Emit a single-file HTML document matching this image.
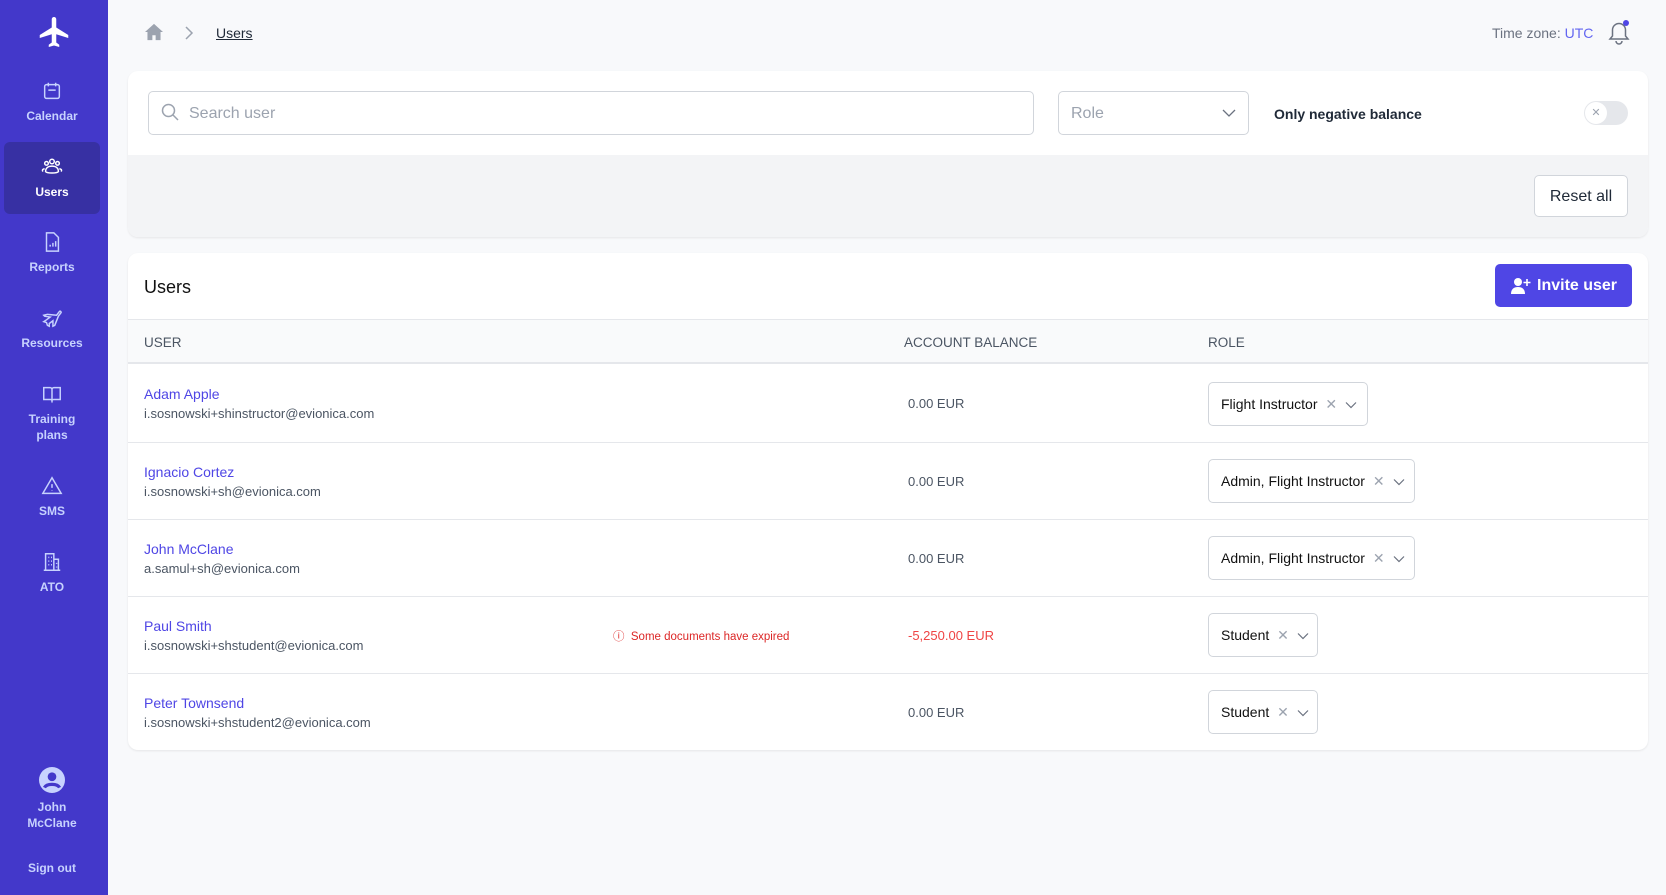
<!DOCTYPE html>
<html><head><meta charset="utf-8"><style>
*{box-sizing:border-box;margin:0;padding:0}
body{width:1666px;height:895px;background:#f8f9fb;font-family:"Liberation Sans",sans-serif;position:relative;overflow:hidden;color:#111827}
.abs{position:absolute}
.side{left:0;top:0;width:108px;height:895px;background:#4338ca}
.nav{position:absolute;left:4px;width:96px;text-align:center;color:#c7d2fe;font-size:12px;font-weight:bold;line-height:16px}
.nav svg{display:block;margin:0 auto 6px}
.card{background:#fff;border-radius:10px;box-shadow:0 1px 2px rgba(0,0,0,.08)}
.name{color:#4f46e5;font-size:14px}
.email{color:#4b5563;font-size:13px}
.bal{color:#4b5563;font-size:13px}
.sel{height:44px;border:1px solid #d1d5db;border-radius:5px;background:#fff;font-size:14px;line-height:42px;padding-left:12px;color:#111;white-space:nowrap}
.sel .x{color:#9ca3af;margin-left:4px}
.sel svg{display:inline-block;vertical-align:middle;margin-left:8px}
.row{position:absolute;left:128px;width:1520px;height:77px;border-top:1px solid #e5e7eb}
</style></head><body>
<div class="abs side">
 <svg class="abs" style="left:34px;top:14px" width="40" height="36" viewBox="0 0 24 24" fill="#fff"><path d="M21 16v-2l-8-5V3.5a1.5 1.5 0 0 0-3 0V9l-8 5v2l8-2.5V19l-2 1.5V22l3.5-1 3.5 1v-1.5L13 19v-5.5z" transform="translate(0.5,0)"/></svg>
 <div class="nav" style="top:80px"><svg width="22" height="22" viewBox="0 0 24 24" fill="none" stroke="#c7d2fe" stroke-width="1.6"><rect x="4" y="5" width="16" height="15" rx="2"/><path d="M8 3v4M16 3v4M8 11h8"/></svg>Calendar</div>
 <div class="abs" style="left:4px;top:142px;width:96px;height:72px;background:#3730a3;border-radius:6px"></div>
 <div class="nav" style="top:156px;color:#fff"><svg width="24" height="22" viewBox="0 0 24 24" fill="none" stroke="#fff" stroke-width="1.6"><circle cx="12" cy="6" r="2.5"/><circle cx="6" cy="8" r="2"/><circle cx="18" cy="8" r="2"/><path d="M5 17c0-4 3-6 7-6s7 2 7 6c-2 2-12 2-14 0zM4 14c-2 0-3 1-2 3M20 14c2 0 3 1 2 3"/></svg>Users</div>
 <div class="nav" style="top:231px"><svg width="22" height="22" viewBox="0 0 24 24" fill="none" stroke="#c7d2fe" stroke-width="1.6"><path d="M6 2h8l5 5v15H6z"/><path d="M10 17v-2M13 17v-4M16 17v-6"/></svg>Reports</div>
 <div class="nav" style="top:307px"><svg width="22" height="22" viewBox="0 0 24 24" fill="none" stroke="#c7d2fe" stroke-width="1.6"><path d="M3 9l4-1 10 1 3-4c1-1 2 0 2 1l-3 4-4 10-2 1 0-6-4 3 0 3-2-1-1-3-3-1 3-2 4-3-6-1z"/></svg>Resources</div>
 <div class="nav" style="top:383px"><svg width="22" height="22" viewBox="0 0 24 24" fill="none" stroke="#c7d2fe" stroke-width="1.6"><path d="M3 5h7a2 2 0 0 1 2 2v12a2 2 0 0 0-2-1H3zM21 5h-7a2 2 0 0 0-2 2v12a2 2 0 0 1 2-1h7z"/></svg>Training<br>plans</div>
 <div class="nav" style="top:475px"><svg width="22" height="22" viewBox="0 0 24 24" fill="none" stroke="#c7d2fe" stroke-width="1.6"><path d="M12 3L2 20h20z M12 10v4M12 16.5v.5"/></svg>SMS</div>
 <div class="nav" style="top:551px"><svg width="22" height="22" viewBox="0 0 24 24" fill="none" stroke="#c7d2fe" stroke-width="1.6"><path d="M3 21h18M5 21V3h9v18M14 9h5v12M8 7h1M11 7h1M8 11h1M11 11h1M8 15h1M11 15h1M17 13v1M17 17v1"/></svg>ATO</div>
 <div class="nav" style="top:767px"><svg width="26" height="26" viewBox="0 0 24 24"><circle cx="12" cy="12" r="12" fill="#c7d2fe"/><circle cx="12" cy="9" r="4" fill="#4338ca"/><path d="M5 19c2-4 12-4 14 0" stroke="#4338ca" stroke-width="3" fill="none"/></svg>John<br>McClane</div>
 <div class="nav" style="top:860px">Sign out</div>
</div>

<svg class="abs" style="left:144px;top:23px" width="20" height="18" viewBox="0 0 24 22" fill="#9ca3af"><path d="M12 1L1 11h3v10h6v-6h4v6h6V11h3z"/></svg>
<svg class="abs" style="left:184px;top:25px" width="10" height="16" viewBox="0 0 10 16" fill="none" stroke="#9ca3af" stroke-width="1.5"><path d="M2 2l6 6-6 6"/></svg>
<div class="abs" style="left:216px;top:25px;font-size:14px;text-decoration:underline;color:#1f2937">Users</div>
<div class="abs" style="left:1492px;top:25px;font-size:14px;color:#6b7280">Time zone: <span style="color:#6366f1">UTC</span></div>
<svg class="abs" style="left:1606px;top:18px" width="26" height="28" viewBox="0 0 26 28" fill="none" stroke="#6b7280" stroke-width="1.5"><path d="M4 21h18l-2.5-3v-6a6.5 6.5 0 0 0-13 0v6zM10 23a3 3 0 0 0 6 0"/><circle cx="20" cy="5" r="3" fill="#4f46e5" stroke="none"/></svg>

<div class="abs card" style="left:128px;top:71px;width:1520px;height:166px;overflow:hidden">
 <div class="abs" style="left:0;top:84px;width:1520px;height:82px;background:#f3f4f6"></div>
 <div class="abs" style="left:20px;top:20px;width:886px;height:44px;border:1px solid #d1d5db;border-radius:5px;background:#fff"></div>
 <svg class="abs" style="left:33px;top:32px" width="18" height="18" viewBox="0 0 18 18" fill="none" stroke="#9ca3af" stroke-width="1.5"><circle cx="7.5" cy="7.5" r="6"/><path d="M12 12l5 5"/></svg>
 <div class="abs" style="left:61px;top:34px;font-size:16px;color:#9ca3af">Search user</div>
 <div class="abs" style="left:930px;top:20px;width:191px;height:44px;border:1px solid #d1d5db;border-radius:5px;background:#fff"></div>
 <div class="abs" style="left:943px;top:34px;font-size:16px;color:#9ca3af">Role</div>
 <svg class="abs" style="left:1094px;top:37px" width="14" height="10" viewBox="0 0 14 10" fill="none" stroke="#6b7280" stroke-width="1.3"><path d="M1 2l6 6 6-6"/></svg>
 <div class="abs" style="left:1146px;top:35px;font-size:14px;font-weight:bold;color:#1f2937">Only negative balance</div>
 <div class="abs" style="left:1456px;top:30px;width:44px;height:24px;border-radius:12px;background:#e5e7eb"></div>
 <div class="abs" style="left:1457px;top:31px;width:22px;height:22px;border-radius:11px;background:#fff;color:#9ca3af;font-size:11px;text-align:center;line-height:22px">✕</div>
 <div class="abs" style="left:1406px;top:104px;width:94px;height:42px;border:1px solid #d1d5db;border-radius:5px;background:#fff;font-size:16px;text-align:center;line-height:42px;color:#1f2937">Reset all</div>
</div>

<div class="abs card" style="left:128px;top:253px;width:1520px;height:497px;overflow:hidden">
 <div class="abs" style="left:16px;top:24px;font-size:18px;color:#111">Users</div>
 <div class="abs" style="left:1367px;top:11px;width:137px;height:43px;background:#4f46e5;border-radius:5px;color:#fff;font-size:16px;font-weight:bold;line-height:43px;padding-left:42px">Invite user</div>
 <svg class="abs" style="left:1383px;top:24px" width="20" height="18" viewBox="0 0 20 18" fill="#fff"><circle cx="7" cy="5" r="4"/><path d="M0 17c0-5 3-7 7-7s7 2 7 7z"/><path d="M16 2v7M12.5 5.5h7" stroke="#fff" stroke-width="1.6"/></svg>
 <div class="abs" style="left:0;top:66px;width:1520px;height:45px;background:#f9fafb;border-top:1px solid #e5e7eb;border-bottom:2px solid #e5e7eb"></div>
 <div class="abs" style="left:16px;top:82px;font-size:13.5px;color:#4b5563">USER</div>
 <div class="abs" style="left:776px;top:82px;font-size:13.5px;color:#4b5563">ACCOUNT BALANCE</div>
 <div class="abs" style="left:1080px;top:82px;font-size:13.5px;color:#4b5563">ROLE</div>
</div>

<div class="row" style="top:365px;border-top:none">
 <div class="abs name" style="left:16px;top:21px">Adam Apple</div><div class="abs email" style="left:16px;top:41px">i.sosnowski+shinstructor@evionica.com</div>
 <div class="abs bal" style="left:780px;top:31px">0.00 EUR</div>
 <div class="abs sel" style="left:1080px;top:17px;width:160px">Flight Instructor <span class="x">✕</span><svg width="12" height="8" viewBox="0 0 12 8" fill="none" stroke="#6b7280" stroke-width="1.2"><path d="M1 1.5l5 5 5-5"/></svg></div>
</div>
<div class="row" style="top:442px">
 <div class="abs name" style="left:16px;top:21px">Ignacio Cortez</div><div class="abs email" style="left:16px;top:41px">i.sosnowski+sh@evionica.com</div>
 <div class="abs bal" style="left:780px;top:31px">0.00 EUR</div>
 <div class="abs sel" style="left:1080px;top:16px;width:207px">Admin, Flight Instructor <span class="x">✕</span><svg width="12" height="8" viewBox="0 0 12 8" fill="none" stroke="#6b7280" stroke-width="1.2"><path d="M1 1.5l5 5 5-5"/></svg></div>
</div>
<div class="row" style="top:519px">
 <div class="abs name" style="left:16px;top:21px">John McClane</div><div class="abs email" style="left:16px;top:41px">a.samul+sh@evionica.com</div>
 <div class="abs bal" style="left:780px;top:31px">0.00 EUR</div>
 <div class="abs sel" style="left:1080px;top:16px;width:207px">Admin, Flight Instructor <span class="x">✕</span><svg width="12" height="8" viewBox="0 0 12 8" fill="none" stroke="#6b7280" stroke-width="1.2"><path d="M1 1.5l5 5 5-5"/></svg></div>
</div>
<div class="row" style="top:596px">
 <div class="abs name" style="left:16px;top:21px">Paul Smith</div><div class="abs email" style="left:16px;top:41px">i.sosnowski+shstudent@evionica.com</div>
 <div class="abs" style="left:485px;top:31px;font-size:11.5px;color:#dc2626">ⓘ&nbsp; Some documents have expired</div>
 <div class="abs bal" style="left:780px;top:31px;color:#ef4444">-5,250.00 EUR</div>
 <div class="abs sel" style="left:1080px;top:16px;width:110px">Student <span class="x">✕</span><svg width="12" height="8" viewBox="0 0 12 8" fill="none" stroke="#6b7280" stroke-width="1.2"><path d="M1 1.5l5 5 5-5"/></svg></div>
</div>
<div class="row" style="top:673px">
 <div class="abs name" style="left:16px;top:21px">Peter Townsend</div><div class="abs email" style="left:16px;top:41px">i.sosnowski+shstudent2@evionica.com</div>
 <div class="abs bal" style="left:780px;top:31px">0.00 EUR</div>
 <div class="abs sel" style="left:1080px;top:16px;width:110px">Student <span class="x">✕</span><svg width="12" height="8" viewBox="0 0 12 8" fill="none" stroke="#6b7280" stroke-width="1.2"><path d="M1 1.5l5 5 5-5"/></svg></div>
</div>
</body></html>
